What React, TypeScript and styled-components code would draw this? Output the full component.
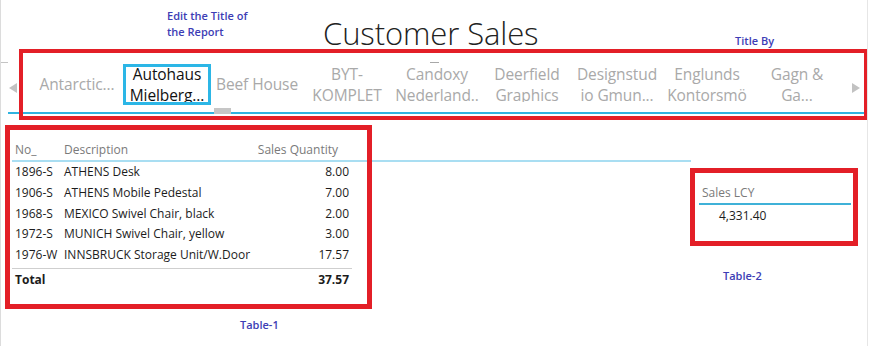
import styled, { createGlobalStyle } from 'styled-components'

const GlobalStyle = createGlobalStyle`
  body {
    margin: 0;
    background: #fff;
  }
  * {
    box-sizing: border-box;
  }
`

const ui = `'Open Sans', 'Noto Sans', 'Liberation Sans', sans-serif`

const Page = styled.div`
  position: relative;
  width: 868px;
  height: 346px;
  border-left: 1px solid #dcdcdc;
  border-right: 1px solid #e6e6e6;
  font-family: ${ui};
  overflow: hidden;
`

const Header = styled.header`
  display: grid;
  grid-template-columns: 156px 412px 1fr;
  height: 62px;
  padding-left: 166px;
`

const Note = styled.div<{ $top: number }>`
  margin-top: ${p => p.$top}px;
  font-size: 11px;
  line-height: 16px;
  font-weight: 600;
  color: #3d3db5;
  white-space: nowrap;
`

const Title = styled.h1`
  margin: 14px 0 0;
  font-size: 31px;
  line-height: 38px;
  font-weight: 300;
  letter-spacing: -0.1px;
  color: #222;
  white-space: nowrap;
`

const SlicerRow = styled.div`
  display: flex;
  height: 52px;
`

const Tick = styled.div<{ $w: number }>`
  width: ${p => p.$w}px;
  border-top: 1px solid #c4c4c4;
  align-self: flex-start;
`

const SlicerBody = styled.div`
  position: relative;
  flex: 1;
  display: flex;
  align-items: flex-start;
  padding-top: 2px;
  border-bottom: 2px solid #2fb3e0;
`

const Handle = styled.div`
  position: absolute;
  top: 0;
  left: 422px;
  width: 9px;
  height: 1px;
  background: #a8a8a8;
`

const ArrowBox = styled.div<{ $w: number; $side: 'left' | 'right' }>`
  width: ${p => p.$w}px;
  align-self: center;
  display: flex;
  justify-content: ${p => (p.$side === 'left' ? 'flex-start' : 'flex-end')};
  padding: ${p => (p.$side === 'left' ? '0 0 0 1px' : '0 4px 0 0')};
`

const Arrow = styled.span<{ $side: 'left' | 'right' }>`
  width: 0;
  height: 0;
  border-top: 5px solid transparent;
  border-bottom: 5px solid transparent;
  ${p =>
    p.$side === 'left'
      ? 'border-right: 8px solid #c2c2c2;'
      : 'border-left: 8px solid #c2c2c2;'}
`

const Item = styled.div<{ $selected?: boolean }>`
  width: ${p => (p.$selected ? 88 : 90)}px;
  margin: 0 ${p => (p.$selected ? 1 : 0)}px;
  height: 41px;
  display: flex;
  flex-direction: column;
  justify-content: center;
  overflow: hidden;
  border: 3px solid ${p => (p.$selected ? '#2cb6e6' : 'transparent')};
  text-align: center;
  font-size: 15.5px;
  line-height: 21px;
  letter-spacing: -0.1px;
  color: ${p => (p.$selected ? '#111' : '#a9a9a9')};
  white-space: nowrap;
`

const Thumb = styled.div`
  position: absolute;
  left: 206px;
  bottom: -2px;
  width: 17px;
  height: 6px;
  background: #c6c6c6;
`

const Content = styled.div`
  display: flex;
  padding-left: 11px;
`

const Table1 = styled.section`
  width: 679px;
  padding-top: 25px;
  display: flex;
  flex-direction: column;
`

const HeadRow = styled.div`
  height: 23px;
  border-bottom: 2px solid #a9def2;
`

const Grid = styled.div`
  width: 340px;
  display: grid;
  grid-template-columns: 49px 1fr auto;
  font-size: 12px;
`

const HeadCell = styled.div<{ $right?: boolean }>`
  line-height: 21px;
  color: #7a7a7a;
  padding-left: ${p => (p.$right ? 0 : 3)}px;
  padding-right: ${p => (p.$right ? 14 : 0)}px;
  text-align: ${p => (p.$right ? 'right' : 'left')};
  white-space: nowrap;
`

const Cell = styled.div<{ $right?: boolean; $bold?: boolean }>`
  height: 20.75px;
  line-height: 20.75px;
  color: #1c1c1c;
  font-weight: ${p => (p.$bold ? 700 : 400)};
  padding-left: ${p => (p.$right ? 0 : 3)}px;
  padding-right: ${p => (p.$right ? 3 : 0)}px;
  text-align: ${p => (p.$right ? 'right' : 'left')};
  white-space: nowrap;
`

const TotalGrid = styled(Grid)`
  margin-top: 2px;
  border-top: 1px solid #cfcfcf;
  padding-top: 1px;
`

const Caption = styled.div<{ $left: number; $top: number }>`
  margin: ${p => p.$top}px 0 0 ${p => p.$left}px;
  font-size: 11px;
  line-height: 14px;
  font-weight: 600;
  color: #3d3db5;
`

const Table2 = styled.section`
  width: 152px;
  margin-left: 8px;
  padding-top: 69px;
`

const CardHead = styled.div`
  height: 22px;
  line-height: 20px;
  padding-left: 3px;
  font-size: 12px;
  color: #7a7a7a;
  border-bottom: 2px solid #3fb1d8;
`

const CardValue = styled.div`
  padding-left: 20px;
  line-height: 22px;
  font-size: 12px;
  color: #1c1c1c;
`

const Mark = styled.div<{ $x: number; $y: number; $w: number; $h: number; $b: number }>`
  position: absolute;
  left: ${p => p.$x}px;
  top: ${p => p.$y}px;
  width: ${p => p.$w}px;
  height: ${p => p.$h}px;
  border: ${p => p.$b}px solid #e31f27;
  pointer-events: none;
`

const customers = [
  ['Antarctic...'],
  ['Autohaus', 'Mielberg...'],
  ['Beef House'],
  ['BYT-', 'KOMPLET'],
  ['Candoxy', 'Nederland..'],
  ['Deerfield', 'Graphics'],
  ['Designstud', 'io Gmun...'],
  ['Englunds', 'Kontorsmö'],
  ['Gagn &', 'Ga...'],
]

const lines = [
  ['1896-S', 'ATHENS Desk', '8.00'],
  ['1906-S', 'ATHENS Mobile Pedestal', '7.00'],
  ['1968-S', 'MEXICO Swivel Chair, black', '2.00'],
  ['1972-S', 'MUNICH Swivel Chair, yellow', '3.00'],
  ['1976-W', 'INNSBRUCK Storage Unit/W.Door', '17.57'],
]

export default function App() {
  return (
    <>
      <GlobalStyle />
      <Page>
        <Header>
          <Note $top={8}>
            Edit the Title of
            <br />
            the Report
          </Note>
          <Title>Customer Sales</Title>
          <Note $top={33}>Title By</Note>
        </Header>

        <SlicerRow>
          <Tick $w={7} />
          <SlicerBody>
            <Handle />
            <ArrowBox $w={24} $side="left">
              <Arrow $side="left" />
            </ArrowBox>
            {customers.map((name, i) => (
              <Item key={name[0]} $selected={i === 1}>
                <span>
                  {name[0]}
                  {name[1] && <br />}
                  {name[1]}
                </span>
              </Item>
            ))}
            <ArrowBox $w={22} $side="right">
              <Arrow $side="right" />
            </ArrowBox>
            <Thumb />
          </SlicerBody>
          <Tick $w={3} />
        </SlicerRow>

        <Content>
          <Table1>
            <HeadRow>
              <Grid>
                <HeadCell>No_</HeadCell>
                <HeadCell>Description</HeadCell>
                <HeadCell $right>Sales Quantity</HeadCell>
              </Grid>
            </HeadRow>
            <Grid>
              {lines.map(([no, desc, qty]) => (
                <>
                  <Cell key={no}>{no}</Cell>
                  <Cell key={no + 'd'}>{desc}</Cell>
                  <Cell key={no + 'q'} $right>
                    {qty}
                  </Cell>
                </>
              ))}
            </Grid>
            <TotalGrid>
              <Cell $bold>Total</Cell>
              <Cell />
              <Cell $right $bold>
                37.57
              </Cell>
            </TotalGrid>
            <Caption $left={228} $top={27}>
              Table-1
            </Caption>
          </Table1>

          <Table2>
            <CardHead>Sales LCY</CardHead>
            <CardValue>4,331.40</CardValue>
            <Caption $left={24} $top={42}>
              Table-2
            </Caption>
          </Table2>
        </Content>

        <Mark $x={18} $y={49} $w={849} $h={71} $b={4} />
        <Mark $x={4} $y={125} $w={367} $h={184} $b={5} />
        <Mark $x={689} $y={168} $w={168} $h={78} $b={5} />
      </Page>
    </>
  )
}
